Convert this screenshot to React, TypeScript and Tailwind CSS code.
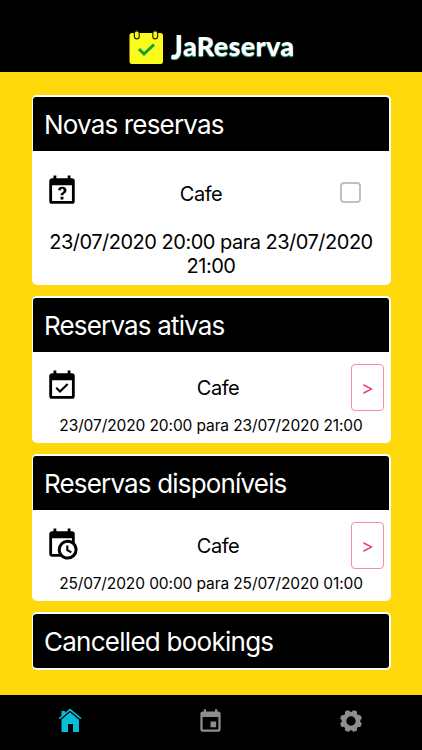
import React from "react";

const QUESTION =
  "M6,1V3H5C3.89,3 3,3.89 3,5V19A2,2 0 0,0 5,21H19A2,2 0 0,0 21,19V5A2,2 0 0,0 19,3H18V1H16V3H8V1H6M5,8H19V19H5V8M12.19,9C11.32,9 10.62,9.2 10.08,9.59C9.56,10 9.3,10.57 9.31,11.36L9.32,11.39H11.25C11.26,11.09 11.35,10.86 11.53,10.7C11.71,10.55 11.93,10.47 12.19,10.47C12.5,10.47 12.76,10.57 12.94,10.75C13.12,10.94 13.2,11.2 13.2,11.5C13.2,11.82 13.13,12.09 12.97,12.32C12.83,12.55 12.62,12.75 12.36,12.91C11.85,13.25 11.5,13.55 11.31,13.82C11.11,14.08 11,14.5 11,15H13C13,14.69 13.04,14.44 13.13,14.26C13.22,14.08 13.39,13.9 13.64,13.74C14.09,13.5 14.46,13.21 14.75,12.81C15.04,12.41 15.19,12 15.19,11.5C15.19,10.74 14.92,10.13 14.38,9.68C13.85,9.23 13.12,9 12.19,9M11,16V18H13V16H11Z";
const CHECK =
  "M19,19H5V8H19M19,3H18V1H16V3H8V1H6V3H5C3.89,3 3,3.9 3,5V19A2,2 0 0,0 5,21H19A2,2 0 0,0 21,19V5A2,2 0 0,0 19,3M16.53,11.06L15.47,10L10.59,14.88L8.47,12.76L7.41,13.82L10.59,17L16.53,11.06Z";
const CLOCK =
  "M15,13H16.5V15.82L18.94,17.23L18.19,18.53L15,16.69V13M19,8H5V19H9.67C9.24,18.09 9,17.07 9,16A7,7 0 0,1 16,9C17.07,9 18.09,9.24 19,9.67V8M5,21C3.89,21 3,20.1 3,19V5C3,3.89 3.89,3 5,3H6V1H8V3H16V1H18V3H19A2,2 0 0,1 21,5V11.1C22.24,12.36 23,14.09 23,16A7,7 0 0,1 16,23C14.09,23 12.36,22.24 11.1,21H5M16,11.15A4.85,4.85 0 0,0 11.15,16C11.15,18.68 13.32,20.85 16,20.85A4.85,4.85 0 0,0 20.85,16C20.85,13.32 18.68,11.15 16,11.15Z";
const EVENT =
  "M19,19H5V8H19M16,1V3H8V1H6V3H5C3.89,3 3,3.89 3,5V19A2,2 0 0,0 5,21H19A2,2 0 0,0 21,19V5C21,3.89 20.1,3 19,3H18V1M17,12H12V17H17V12Z";

function Icon({ d, className }: { d: string; className: string }) {
  return (
    <svg viewBox="0 0 24 24" className={className} fill="currentColor">
      <path d={d} />
    </svg>
  );
}

function CardTitle({ children }: { children: React.ReactNode }) {
  return (
    <h2 className="flex h-[54px] items-center rounded-t-[3px] bg-black pl-[11px] text-[26px] font-normal tracking-[-0.83px] text-white">
      {children}
    </h2>
  );
}

function Booking({ title, icon, when }: { title: string; icon: string; when: string }) {
  return (
    <section className="mb-[11px] h-[147px] rounded-[5px] border-2 border-l border-white bg-white">
      <CardTitle>{title}</CardTitle>
      <div className="flex items-start pt-[12px] pr-[5px] pl-[12px]">
        <Icon d={icon} className="mt-[4.500px] size-[34px]" />
        <span className="mt-[11px] flex-1 pl-[6px] text-center text-[20px] leading-[26px] tracking-[-0.5px]">Cafe</span>
        <button className="flex h-[47px] w-[33px] items-center justify-center rounded-[4px] border border-[#f08db0] pt-[3px] text-[19px] text-[#ee3a7c]">
          &gt;
        </button>
      </div>
      <p className="mt-[6px] text-center text-[15.5px] leading-[18px] tracking-[-0.1px] whitespace-nowrap">{when}</p>
    </section>
  );
}

export default function App() {
  return (
    <div className="flex h-[750px] w-[422px] flex-col overflow-hidden bg-[#ffd80c] font-['Inter','Liberation_Sans',sans-serif] text-black">
      <header className="flex h-[72px] items-start bg-black pt-[30px] pl-[129px]">
        <svg width="35" height="36" viewBox="0 0 35 36">
          <rect x=".5" y="3" width="33.500" height="31" rx="2.5" fill="#fdfb1c" />
          <rect x="5.4" y=".8" width="4.8" height="8" rx="2.4" fill="#fdfb1c" stroke="#222c00" strokeWidth="1.2" />
          <rect x="23.8" y=".8" width="4.8" height="8" rx="2.4" fill="#fdfb1c" stroke="#222c00" strokeWidth="1.2" />
          <path d="M10 19l5 5L25 14.500" fill="none" stroke="#08a52c" strokeWidth="3" />
        </svg>
        <span className="ml-[7px] font-['Lato',sans-serif] text-[27px] leading-[32px] font-black tracking-[0.3px] whitespace-nowrap text-white [text-shadow:0_1px_1px_#3fc69a]">
          <span className="inline-block origin-[50%_25%] scale-y-[1.18]">J</span>aReserva
        </span>
      </header>
      <main className="h-[623px] pt-[23px] pr-[31px] pl-[32px]">
        <section className="mb-[11px] h-[190px] rounded-[5px] border-2 border-l border-white bg-white">
          <CardTitle>Novas reservas</CardTitle>
          <div className="flex items-center pt-[24px] pr-[28px] pl-[12px]">
            <Icon d={QUESTION} className="-mt-px size-[34px]" />
            <span className="flex-1 pt-[4px] pr-[35px] pl-[18px] text-center text-[20px] leading-[26px] tracking-[-0.5px]">
              Cafe
            </span>
            <span className="mt-[1px] size-[21px] rounded-[4px] border-2 border-[#c0c0c0]" />
          </div>
          <p className="mt-[22px] text-center text-[20px] leading-[24px] tracking-[-0.5px] whitespace-nowrap">
            23/07/2020 20:00 para 23/07/2020
            <br />
            21:00
          </p>
        </section>
        <Booking title="Reservas ativas" icon={CHECK} when="23/07/2020 20:00 para 23/07/2020 21:00" />
        <Booking title="Reservas disponíveis" icon={CLOCK} when="25/07/2020 00:00 para 25/07/2020 01:00" />
        <section className="h-[58px] overflow-hidden rounded-[5px] border-2 border-l border-white bg-black">
          <h2 className="flex h-[54px] items-center pl-[11px] text-[26px] font-normal tracking-[-0.74px] text-white">
            Cancelled bookings
          </h2>
        </section>
      </main>
      <nav className="flex h-[55px] items-start bg-black pt-[12px]">
        <div className="flex w-[140px] justify-center">
          <svg width="24" height="26" viewBox="0 0 24 26" fill="#08bcd8">
            <path d="M12 5.200L3.500 12.500V25H10v-8h5v8h6V12.700z" />
            <path d="M1.300 11.700L12 2.600 23 11.700" fill="none" stroke="#000" strokeWidth="3" />
            <path d="M3.500 4H7v3L3.500 10z" />
            <path d="M1.300 11.700L12 2.600 23 11.700" fill="none" stroke="#08bcd8" strokeWidth="1.600" />
          </svg>
        </div>
        <div className="flex w-[141px] justify-center text-[#8e8d94]">
          <Icon d={EVENT} className="mt-px size-[27px]" />
        </div>
        <div className="flex w-[140px] justify-center">
          <svg width="24" height="26" viewBox="-12 -13 24 26" fill="#8e8d94" className="mt-px">
            <circle r="7" fill="none" stroke="#8e8d94" strokeWidth="4.600" />
            {[22.5, 67.5, 112.5, 157.5, 202.5, 247.5, 292.5, 337.5].map((a) => (
              <path key={a} transform={`rotate(${a})`} d="M-3 -8L-2.200 -10.400Q-2 -11 -1.400 -11H1.400Q2 -11 2.200 -10.400L3 -8z" />
            ))}
          </svg>
        </div>
      </nav>
    </div>
  );
}
